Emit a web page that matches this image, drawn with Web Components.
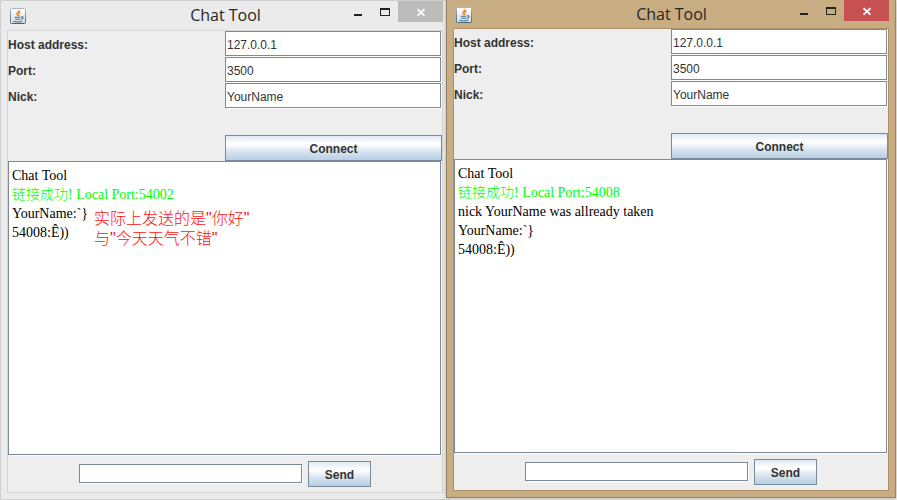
<!DOCTYPE html>
<html lang="en">
<head>
<meta charset="utf-8">
<title>Chat Tool</title>
<style>
html, body { margin: 0; }
body { background: #e6e6e6; font-family: "Liberation Sans", sans-serif; font-size: 12px; color: #333; }
chat-window { --frame: #ebebeb; --edge: #cfcfcf; --line: #d6d6d6; --close: #bcbcbc; --title-h: 30px; }
chat-window.active { --frame: #c8ad82; --edge: #978261; --line: #ad9069; --close: #c75050; --title-h: 28px; }
</style>
</head>
<body>
<chat-desktop>
  <chat-window heading="Chat Tool" host="127.0.0.1" port="3500" nick="YourName">
    <chat-line>Chat Tool</chat-line>
    <chat-line class="ok">链接成功! Local Port:54002</chat-line>
    <chat-line>YourName:`}</chat-line>
    <chat-line>54008:Ê))</chat-line>
    <chat-note slot="note">实际上发送的是"你好"<br>与"今天天气不错"</chat-note>
  </chat-window>
  <chat-window class="active" heading="Chat Tool" host="127.0.0.1" port="3500" nick="YourName">
    <chat-line>Chat Tool</chat-line>
    <chat-line class="ok">链接成功! Local Port:54008</chat-line>
    <chat-line>nick YourName was allready taken</chat-line>
    <chat-line>YourName:`}</chat-line>
    <chat-line>54008:Ê))</chat-line>
  </chat-window>
</chat-desktop>
<script>
const define = (name, html, setup) => customElements.define(name, class extends HTMLElement {
  connectedCallback() {
    if (this.shadowRoot) return;
    this.attachShadow({ mode: 'open' }).innerHTML = html;
    if (setup) setup(this, this.shadowRoot);
  }
});

define('chat-desktop', `
<style>
:host { display: flex; min-height: 100vh; padding-right: 1px; box-sizing: border-box; background: linear-gradient(#f3efe9, #f3efe9) right / 1px 100% no-repeat; }
::slotted(chat-window) { flex: 1 1 0; min-width: 0; }
/* the active window overlaps the edge of the one behind it */
::slotted(.active) { margin: 0 0 2px -4px; z-index: 1; box-shadow: 0 0 4px rgba(0,0,0,.25); }
</style><slot></slot>`);

define('chat-line', `
<style>
:host { display: block; font: 14px/19px "Liberation Serif", "Noto Sans CJK SC", serif; color: #000; }
:host(.ok) { color: #0f0; font-weight: 300; }
</style><slot></slot>`);

define('chat-note', `
<style>
:host { display: block; position: absolute; left: 85px; top: 47px; font: 300 16px/20px "Liberation Sans", "Noto Sans CJK SC", sans-serif; color: #ff1010; white-space: nowrap; }
</style><slot></slot>`);

define('metal-button', `
<style>
:host { display: block; }
button { display: block; box-sizing: border-box; width: 100%; height: 26px; padding: 2px 16px 0; border: 1px solid #7a8a99; border-radius: 0; font: bold 12px/16px "Liberation Sans", sans-serif; color: #333;
  background: linear-gradient(#dde8f3, #fff 30%, #fff 36%, #dbe7f1 60%, #b8cfe5); }
</style><button type="button"><slot></slot></button>`);

define('metal-field', `
<style>
:host { display: grid; grid-template-columns: 1fr 1fr; align-items: center; }
:host([bare]) { display: block; }
label { padding-top: 2px; font: bold 12px/16px "Liberation Sans", sans-serif; }
.box { padding: 0 1px 1px 0; }
input { display: block; box-sizing: border-box; width: 100%; height: 25px; margin: 0; padding: 2px 1px 0; border: 1px solid #7a8a99; border-radius: 0; background: #fff; box-shadow: 1px 1px 0 #fff; font: 12px/16px "Liberation Sans", sans-serif; color: #333; outline: 0; }
:host([bare]) input { height: 19px; }
</style><label for="f"></label><div class="box"><input id="f" type="text"></div>`,
(el, root) => {
  const label = root.querySelector('label'), input = root.querySelector('input'), text = el.getAttribute('label');
  if (el.hasAttribute('bare')) { label.remove(); input.setAttribute('aria-label', text); }
  else label.textContent = text;
});

define('java-icon', `
<style>:host { display: block; } svg { display: block; }</style>
<svg width="16" height="16" viewBox="0 0 16 16" aria-hidden="true">
  <defs><linearGradient id="g" x2="0" y2="1"><stop stop-color="#fff"/><stop offset="1" stop-color="#d5dfe6"/></linearGradient>
  <linearGradient id="b" x2="0" y2="1"><stop stop-color="#a8b8c5"/><stop offset="1" stop-color="#416682"/></linearGradient></defs>
  <rect x=".5" y=".5" width="15" height="15" rx="1" fill="url(#g)" stroke="url(#b)"/>
  <path d="M9.4 2c.5 1.6-3 2.2-2.6 3.8.1.8 1 1.2.8 2.2M10.4 4.2c-1.7.7-2.3 1.2-1.5 2.1.5.7.2 1.2-.5 1.8" fill="none" stroke="#ee8522" stroke-width="1.3"/>
  <path d="M4.5 9.2h6M5.2 11.3h5M3.3 13.3c3 .8 7 .7 9-.3M11 9c2.9-1 2.8 1.8.2 2.4" fill="none" stroke="#47718f" stroke-width="1.1"/>
</svg>`);

define('title-bar', `
<style>
:host { display: grid; grid-template-columns: 1fr auto 1fr; align-items: end; height: 100%; padding: 0 8px 0 9px; box-sizing: border-box; }
java-icon { padding-bottom: 7px; }
h1 { margin: 0; padding-bottom: 5px; font: 16px/22px "Open Sans", sans-serif; color: #262626; }
nav { display: flex; justify-content: flex-end; align-self: stretch; margin-right: -2px; padding-bottom: 9px; }
button { width: 27px; padding: 0; border: 0; background: none; display: flex; justify-content: center; align-items: flex-end; }
.close { width: 45px; background: var(--close); }
svg { display: block; }
</style>
<java-icon></java-icon><h1></h1>
<nav>
<button type="button" aria-label="Minimize"><svg width="8" height="21"><path d="M0 13h8v2H0z" fill="#222"/></svg></button>
<button type="button" aria-label="Maximize"><svg width="10" height="21"><path d="M0 7h10v8H0zM1 9v5h8V9z" fill="#222" fill-rule="evenodd"/></svg></button>
<button type="button" class="close" aria-label="Close"><svg width="8" height="20"><path d="M.5 7.2l7 6.5M7.5 7.2L.5 13.7" stroke="#fff" stroke-width="1.8"/></svg></button>
</nav>`);

define('chat-window', `
<style>
:host { display: flex; flex-direction: column; box-sizing: border-box; background: var(--frame); border: 1px solid var(--edge); }
:host(.active) { border-top: 0; }
header { height: calc(var(--title-h) - 1px); }
:host(.active) header { height: var(--title-h); }
main { flex: 1; display: flex; flex-direction: column; margin: 0 6px 6px; border: 1px solid var(--line); background: #eee; }
form { display: grid; grid-auto-rows: 26px; }
.connect { display: grid; grid-template-columns: 1fr 1fr; grid-row: 5; }
.connect metal-button { grid-column: 2; }
.log { flex: 1; position: relative; margin: 0 1px 1px 0; padding: 4px 3px; border: 1px solid #7a8a99; background: #fff; box-shadow: 1px 1px 0 #fff; }
footer { display: flex; justify-content: center; align-items: center; gap: 5px; padding: 5px; }
footer metal-field { flex: 0 1 224px; }
</style>
<header><title-bar></title-bar></header>
<main>
  <form>
    <metal-field label="Host address:"></metal-field>
    <metal-field label="Port:"></metal-field>
    <metal-field label="Nick:"></metal-field>
    <div class="connect"><metal-button>Connect</metal-button></div>
  </form>
  <div class="log" role="log"><slot></slot><slot name="note"></slot></div>
  <footer><metal-field bare label="Message"></metal-field><metal-button>Send</metal-button></footer>
</main>`, (el, root) => {
  root.querySelector('title-bar').shadowRoot.querySelector('h1').textContent = el.getAttribute('heading');
  const fields = root.querySelectorAll('form metal-field');
  ['host', 'port', 'nick'].forEach((k, i) => { fields[i].shadowRoot.querySelector('input').value = el.getAttribute(k); });
});
</script>
</body>
</html>
